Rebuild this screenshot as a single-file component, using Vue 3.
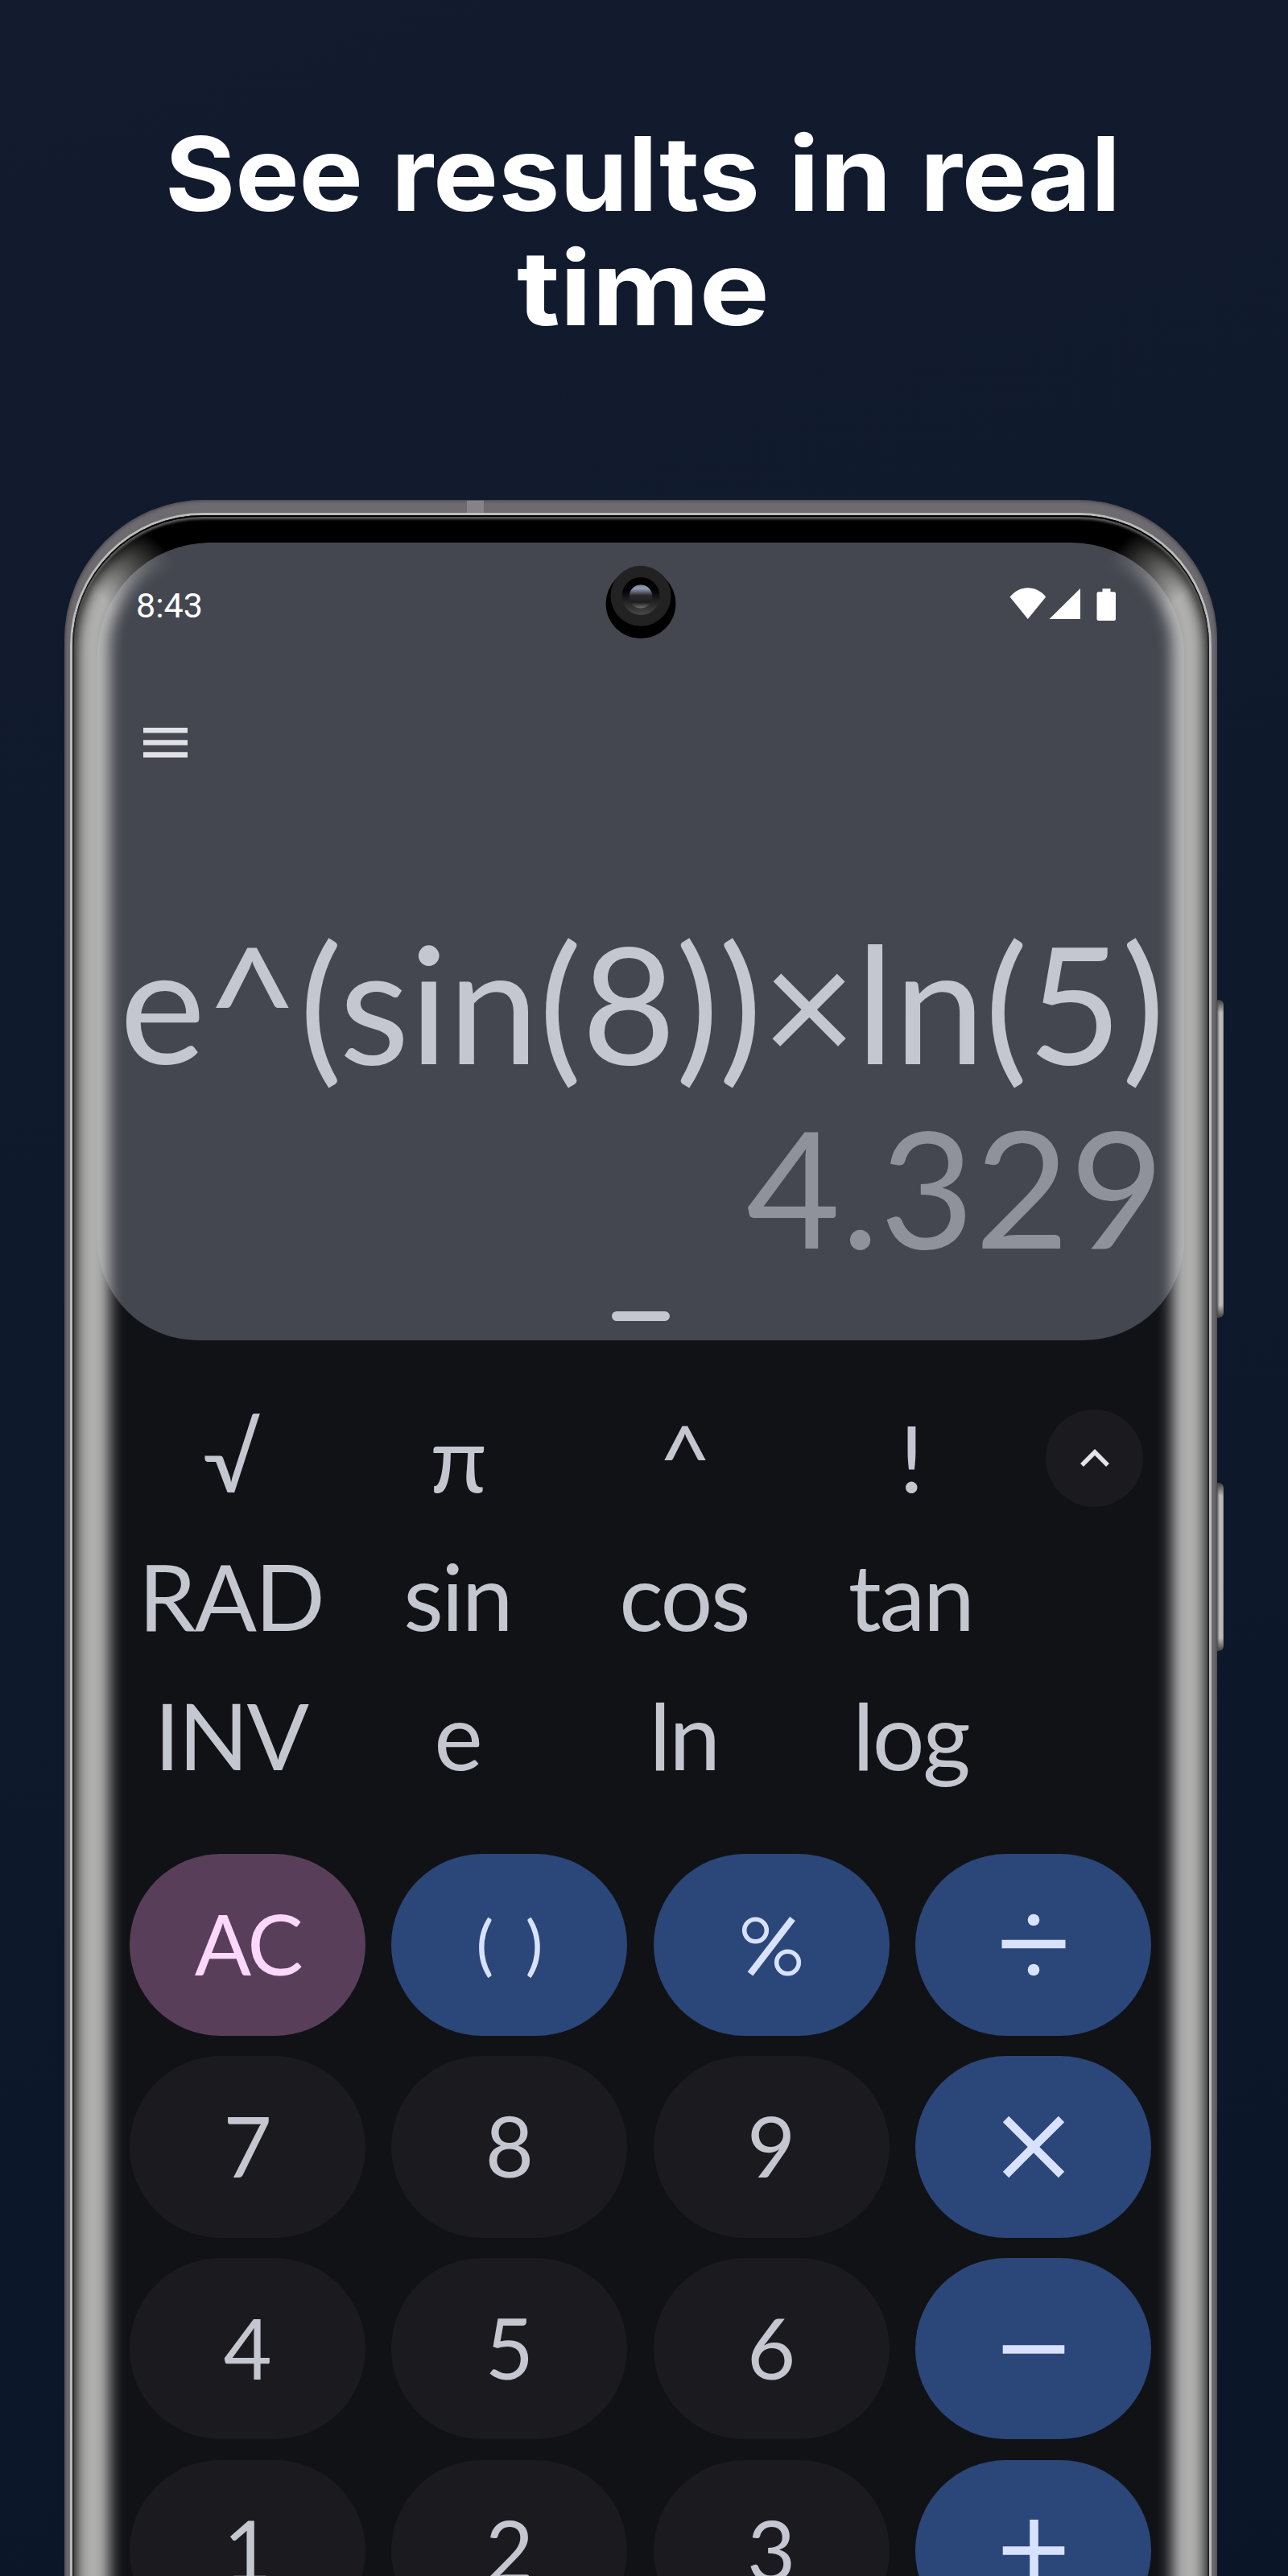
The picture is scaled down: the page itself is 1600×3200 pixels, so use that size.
<script setup>
const functions = ['√', 'π', '^', '!', 'RAD', 'sin', 'cos', 'tan', 'INV', 'e', 'ln', 'log']

const titleWords = [
  { text: 'See', x: 205, y: 162, width: 246 },
  { text: 'results', x: 486, y: 162, width: 458 },
  { text: 'in', x: 979, y: 162, width: 129 },
  { text: 'real', x: 1143, y: 162, width: 249 },
  { text: 'time', x: 642, y: 304, width: 314 },
]

const keys = [
  { label: 'AC', kind: 'clear' },
  { label: '( )', kind: 'operator', paren: true },
  { icon: 'percent', kind: 'operator' },
  { icon: 'divide', kind: 'operator' },
  { label: '7' }, { label: '8' }, { label: '9' },
  { icon: 'multiply', kind: 'operator' },
  { label: '4' }, { label: '5' }, { label: '6' },
  { icon: 'minus', kind: 'operator' },
  { label: '1' }, { label: '2' }, { label: '3' },
  { icon: 'plus', kind: 'operator' },
]
</script>

<template>
  <main class="page">
    <h1 class="title">
      <svg class="title-text" width="1600" height="400" viewBox="0 0 1600 400">
        <text
          v-for="w in titleWords"
          :key="w.text"
          :x="w.x"
          :y="w.y"
          :textLength="w.width"
          lengthAdjust="spacingAndGlyphs"
        >{{ w.text }}</text>
      </svg>
    </h1>

    <section class="phone">
      <i class="antenna"></i>
      <i class="side-button volume"></i>
      <i class="side-button power"></i>
      <div class="rim">
        <div class="bezel">
          <div class="screen">
            <div class="display">
              <header class="status">
                <span class="clock">8:43</span>
                <svg class="status-icons" width="134" height="42" viewBox="0 0 134 42" fill="#fff">
                  <path d="M0.5 11.5C13-3.5 33-3.5 45.2 11.5L22.8 39Z" />
                  <path d="M49.500 39L88 1V39Z" />
                  <path d="M115.500 1.300h10v4h4.500q2 0 2 2V39q0 2-2 2h-19.500q-2 0-2-2V7.300q0-2 2-2h5Z" />
                </svg>
              </header>
              <svg class="menu" width="55" height="37" viewBox="0 0 55 37" fill="#e3e1e8">
                <path d="M0 0h55v6.600H0zM0 15.200h55v6.600H0zM0 30.300h55v6.600H0z" />
              </svg>
              <div class="expression">e^(sin(8))×ln(5)</div>
              <div class="result">4.329</div>
              <i class="handle"></i>
            </div>

            <div class="advanced">
              <div class="functions">
                <span v-for="f in functions" :key="f" class="fn">{{ f }}</span>
              </div>
              <button class="toggle" aria-label="Collapse">
                <svg width="40" height="26" viewBox="0 0 40 26">
                  <path d="M4 22L20 6L36 22" fill="none" stroke="#e6e2e8" stroke-width="5.500" />
                </svg>
              </button>
            </div>

            <div class="keypad">
              <button v-for="(k, i) in keys" :key="i" class="key" :class="k.kind">
                <span v-if="k.label" class="label" :class="{ paren: k.paren }">{{ k.label }}</span>
                <svg v-else width="90" height="90" viewBox="-45 -45 90 90" fill="none" stroke="#d8e2ff">
                  <g v-if="k.icon === 'percent'">
                    <circle cx="-19.500" cy="-18" r="13.800" stroke-width="5.600" />
                    <circle cx="20.500" cy="22" r="13.800" stroke-width="5.600" />
                    <path d="M26.500 -32.500L-26 36" stroke-width="8.500" />
                  </g>
                  <g v-else-if="k.icon === 'divide'">
                    <path d="M-39.500 -1H39.500" stroke-width="10.600" />
                    <circle cy="-31" r="7.300" fill="#d8e2ff" stroke="none" />
                    <circle cy="31" r="7.300" fill="#d8e2ff" stroke="none" />
                  </g>
                  <path v-else-if="k.icon === 'multiply'" d="M-34.500 -34.500L34.500 34.500M34.500 -34.500L-34.500 34.500" stroke-width="10.400" />
                  <path v-else-if="k.icon === 'minus'" d="M-38.300 0.500H38.300" stroke-width="10.600" />
                  <path v-else d="M-38.300 0.500H38.300M0.500 -38V38.500" stroke-width="10.600" />
                </svg>
              </button>
            </div>
          </div>
        </div>
      </div>

      <!-- light running along the curved glass edges, drawn over the screen -->
      <svg class="glass" width="1432" height="2579" viewBox="80 621 1432 2579">
        <defs>
          <filter id="soft" filterUnits="userSpaceOnUse" x="0" y="560" width="1600" height="2760">
            <feGaussianBlur stdDeviation="9" />
          </filter>
          <clipPath id="glassArea">
            <rect x="91.500" y="642" width="1409" height="2800" rx="161" />
          </clipPath>
          <linearGradient id="fadeLeft" gradientUnits="userSpaceOnUse" x1="122" y1="738" x2="192" y2="668">
            <stop offset="0" stop-color="#fff" />
            <stop offset="1" stop-color="#000" />
          </linearGradient>
          <linearGradient id="fadeRight" gradientUnits="userSpaceOnUse" x1="1470" y1="738" x2="1400" y2="668">
            <stop offset="0" stop-color="#fff" />
            <stop offset="1" stop-color="#000" />
          </linearGradient>
          <mask id="maskLeft" maskUnits="userSpaceOnUse" x="80" y="600" width="716" height="2700">
            <rect x="80" y="600" width="716" height="2700" fill="url(#fadeLeft)" />
          </mask>
          <mask id="maskRight" maskUnits="userSpaceOnUse" x="796" y="600" width="716" height="2700">
            <rect x="796" y="600" width="716" height="2700" fill="url(#fadeRight)" />
          </mask>
          <linearGradient id="ring" x1="0" y1="0" x2="0" y2="1">
            <stop offset=".35" stop-color="#030303" />
            <stop offset="1" stop-color="#484848" />
          </linearGradient>
          <linearGradient id="lens" x1="0" y1="0" x2="0" y2="1">
            <stop offset="0" stop-color="#85878d" />
            <stop offset=".16" stop-color="#8e9cba" />
            <stop offset=".45" stop-color="#2b2b2c" />
            <stop offset=".75" stop-color="#1d1d1d" />
            <stop offset="1" stop-color="#707070" />
          </linearGradient>
        </defs>
        <g clip-path="url(#glassArea)" fill="none" stroke="#c3c3c2" stroke-opacity=".9" stroke-width="42">
          <g mask="url(#maskLeft)">
            <path d="M115 3290V806A139 139 0 0 1 254 667" filter="url(#soft)" />
          </g>
          <g mask="url(#maskRight)">
            <path d="M1477 3290V806A139 139 0 0 0 1338 667" filter="url(#soft)" />
          </g>
        </g>
        <circle cx="796" cy="749.800" r="43.500" fill="#000" />
        <circle cx="796" cy="740.300" r="37.500" fill="#222223" />
        <circle cx="796" cy="740.500" r="23.500" fill="url(#ring)" />
        <circle cx="796" cy="741" r="14.400" fill="url(#lens)" />
      </svg>
    </section>
  </main>
</template>

<style>
body { margin: 0; background: #0a1628; }
</style>

<style scoped>
.page {
  width: 1600px;
  height: 3200px;
  overflow: hidden;
  box-sizing: border-box;
  padding-top: 100px;
  background: linear-gradient(160deg, #131b2e 0%, #101a2d 30%, #0a1628 100%);
  font-family: Lato, "Liberation Sans", sans-serif;
}
.title { margin: 0; height: 521px; }
.title-text { display: block; font: 700 128px Inter, "Open Sans", sans-serif; fill: #fff; overflow: visible; }

.phone {
  position: relative;
  width: 1432px;
  height: 2840px;
  margin-left: 80px;
  box-sizing: border-box;
  padding: 16px 7px;
  border-radius: 174px;
  background: #6d6b70;
  box-shadow: inset 0 0 4px 1px #434146;
}
.antenna {
  position: absolute;
  left: 500px;
  top: 1px;
  width: 21px;
  height: 15px;
  background: #858388;
}
.side-button {
  position: absolute;
  left: 1432px;
  width: 8px;
  border-radius: 0 6px 6px 0;
  background: linear-gradient(90deg, rgba(70, 70, 70, .8), transparent 35%, transparent 80%, rgba(90, 90, 90, .6)),
    linear-gradient(#3c3c3a, #bbbbbd 16px, #bbbbbd calc(100% - 16px), #3c3c3a);
}
.volume { top: 621px; height: 395px; }
.power { top: 1221px; height: 209px; }

.rim {
  height: 2808px;
  box-sizing: border-box;
  padding: 3px;
  border-radius: 165px;
  background: #bcbcbc;
}
.bezel {
  height: 2802px;
  box-sizing: border-box;
  padding: 34px 31px;
  border-radius: 162px;
  background: #000;
  box-shadow: inset 0 2px 0 #000, inset 0 5px 3px #5a5a5a;
}
.screen {
  height: 2734px;
  border-radius: 141px;
  overflow: hidden;
  background: #111216;
}
.display {
  display: flex;
  flex-direction: column;
  height: 990.500px;
  border-radius: 0 0 125px 125px;
  background: #44474f;
}
.status {
  display: flex;
  justify-content: space-between;
  align-items: flex-start;
  height: 230px;
  box-sizing: border-box;
  padding: 52px 83px 0 48px;
}
.clock { font: 400 43px/50px Roboto, sans-serif; color: #fff; padding-top: 1px; }
.status-icons { display: block; margin-top: 4px; }
.menu { display: block; margin-left: 57px; margin-bottom: 189px; flex: none; }
.expression, .result {
  font-size: 202px;
  line-height: 229px;
  text-align: right;
  white-space: pre;
  color: #c4c6d0;
  padding-right: 24px;
}
.expression { letter-spacing: -.35px; }
.result { color: #8f929b; letter-spacing: .8px; }
.handle {
  width: 72px;
  height: 12px;
  margin: 41px auto 0;
  border-radius: 6px;
  background: #c4c6d0;
}

.advanced { display: flex; height: 638.500px; box-sizing: border-box; padding: 59px 51px 0 25px; }
.functions {
  display: grid;
  grid-template-columns: repeat(4, 281.500px);
  grid-auto-rows: 172.600px;
  flex: 1;
}
.fn {
  display: block;
  text-align: center;
  font-size: 114.500px;
  line-height: 172.600px;
  letter-spacing: -2.300px;
  color: #c4c6d0;
}
.toggle {
  display: flex;
  align-items: center;
  justify-content: center;
  width: 121px;
  height: 121px;
  flex: none;
  margin-top: 27px;
  padding: 0;
  border: 0;
  border-radius: 50%;
  background: #1b1a1f;
}

.keypad {
  display: grid;
  grid-template-columns: repeat(4, 293px);
  grid-auto-rows: 225.700px;
  gap: 25.200px 32.300px;
  padding-left: 40.200px;
}
.key {
  display: flex;
  align-items: center;
  justify-content: center;
  padding: 0;
  border: 0;
  border-radius: 113px;
  background: #1b1a1f;
  color: #c4c6d0;
  font-family: inherit;
}
.label { font-size: 104px; line-height: 120px; padding-bottom: 3px; }
.clear .label { letter-spacing: -3px; }
.label.paren { font-size: 81px; word-spacing: 19px; padding-bottom: 4px; }
.operator { background: #2b4678; color: #d8e2ff; }
.clear { background: #593e5a; color: #fbd7fc; }

.glass { position: absolute; left: 0; top: 0; pointer-events: none; }
</style>
